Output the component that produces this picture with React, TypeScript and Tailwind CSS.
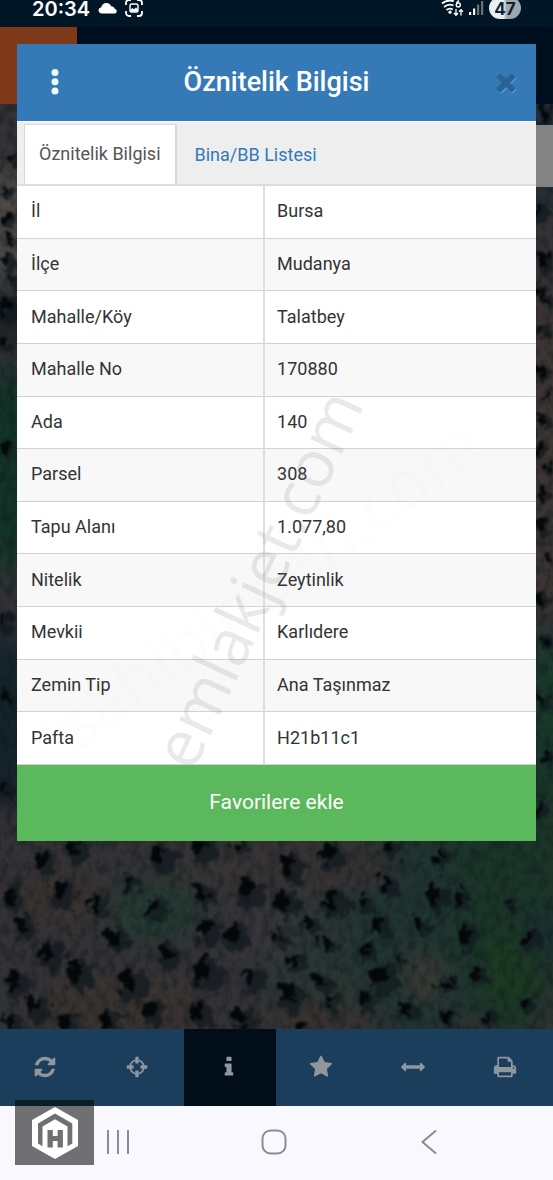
import React from "react";

const rows: [string, string][] = [
  ["İl", "Bursa"],
  ["İlçe", "Mudanya"],
  ["Mahalle/Köy", "Talatbey"],
  ["Mahalle No", "170880"],
  ["Ada", "140"],
  ["Parsel", "308"],
  ["Tapu Alanı", "1.077,80"],
  ["Nitelik", "Zeytinlik"],
  ["Mevkii", "Karlıdere"],
  ["Zemin Tip", "Ana Taşınmaz"],
  ["Pafta", "H21b11c1"],
];

const icons = {
  refresh:
    "M1639 1056q0 5-1 7-64 268-268 434.5t-478 166.5q-146 0-282.5-55t-243.5-157l-129 129q-19 19-45 19t-45-19-19-45v-448q0-26 19-45t45-19h448q26 0 45 19t19 45-19 45l-137 137q71 66 161 102t187 36q134 0 250-65t186-179q11-17 53-117 8-23 30-23h192q13 0 22.5 9.5t9.5 22.5zm25-800v448q0 26-19 45t-45 19h-448q-26 0-45-19t-19-45 19-45l138-138q-148-137-349-137-134 0-250 65t-186 179q-11 17-53 117-8 23-30 23h-199q-13 0-22.5-9.5t-9.5-22.5v-7q65-268 270-434.5t480-166.5q146 0 284 55.5t245 156.5l130-129q19-19 45-19t45 19 19 45z",
  locate:
    "M1325 1024h-109q-26 0-45-19t-19-45v-128q0-26 19-45t45-19h109q-32-108-112.5-188.5t-188.5-112.5v109q0 26-19 45t-45 19h-128q-26 0-45-19t-19-45v-109q-108 32-188.5 112.5t-112.5 188.5h109q26 0 45 19t19 45v128q0 26-19 45t-45 19h-109q32 108 112.5 188.5t188.5 112.5v-109q0-26 19-45t45-19h128q26 0 45 19t19 45v109q108-32 188.5-112.5t112.5-188.5zm339-192v128q0 26-19 45t-45 19h-143q-37 161-154.5 278.5t-278.5 154.5v143q0 26-19 45t-45 19h-128q-26 0-45-19t-19-45v-143q-161-37-278.5-154.5t-154.5-278.5h-143q-26 0-45-19t-19-45v-128q0-26 19-45t45-19h143q37-161 154.5-278.5t278.5-154.5v-143q0-26 19-45t45-19h128q26 0 45 19t19 45v143q161 37 278.5 154.5t154.5 278.5h143q26 0 45 19t19 45z",
  info:
    "M1216 1344v128q0 26-19 45t-45 19h-512q-26 0-45-19t-19-45v-128q0-26 19-45t45-19h64v-384h-64q-26 0-45-19t-19-45v-128q0-26 19-45t45-19h384q26 0 45 19t19 45v576h64q26 0 45 19t19 45zm-128-1152v192q0 26-19 45t-45 19h-256q-26 0-45-19t-19-45v-192q0-26 19-45t45-19h256q26 0 45 19t19 45z",
  star:
    "M1728 647q0 22-26 48l-363 354 86 500q1 7 1 20 0 21-10.5 35.5t-30.5 14.5q-19 0-40-12l-449-236-449 236q-22 12-40 12-21 0-31.5-14.5t-10.5-35.5q0-6 2-20l86-500-364-354q-25-27-25-48 0-37 56-46l502-73 225-455q19-41 49-41t49 41l225 455 502 73q56 9 56 46z",
  measure:
    "M1792 896q0 26-19 45l-256 256q-19 19-45 19t-45-19-19-45v-128h-1024v128q0 26-19 45t-45 19-45-19l-256-256q-19-19-19-45t19-45l256-256q19-19 45-19t45 19 19 45v128h1024v-128q0-26 19-45t45-19 45 19l256 256q19 19 19 45z",
  print:
    "M448 1536h896v-256h-896v256zm0-640h896v-384h-160q-40 0-68-28t-28-68v-160h-640v640zm1152 64q0-26-19-45t-45-19-45 19-19 45 19 45 45 19 45-19 19-45zm128 0v416q0 13-9.5 22.5t-22.5 9.5h-224v160q0 40-28 68t-68 28h-960q-40 0-68-28t-28-68v-160h-224q-13 0-22.5-9.5t-9.5-22.5v-416q0-79 56.5-135.5t135.5-56.5h64v-544q0-40 28-68t68-28h672q40 0 88 20t76 48l152 152q28 28 48 76t20 88v256h64q79 0 135.5 56.5t56.5 135.5z",
  close:
    "M1490 1322q0 40-28 68l-136 136q-28 28-68 28t-68-28l-294-294-294 294q-28 28-68 28t-68-28l-136-136q-28-28-28-68t28-68l294-294-294-294q-28-28-28-68t28-68l136-136q28-28 68-28t68 28l294 294 294-294q28-28 68-28t68 28l136 136q28 28 28 68t-28 68l-294 294 294 294q28 28 28 68z",
};

function Icon({ name, className }: { name: keyof typeof icons; className: string }) {
  return (
    <svg viewBox="0 0 1792 1792" className={className} fill="currentColor" aria-hidden="true">
      <path d={icons[name]} />
    </svg>
  );
}

/* Tree crowns: x, y, radius */
const trees: [number, number, number][] = [
  [45, 862, 12], [75, 851, 10], [162, 861, 13], [202, 850, 12], [240, 849, 9], [290, 868, 12], [330, 856, 12],
  [12, 898, 11], [62, 894, 12], [97, 905, 10], [130, 882, 9], [156, 910, 11], [204, 895, 10], [249, 894, 14],
  [286, 904, 12], [335, 904, 13], [367, 903, 8], [388, 885, 9], [437, 898, 12], [462, 900, 8], [441, 858, 8],
  [24, 929, 11], [116, 940, 11], [207, 932, 12], [235, 937, 13], [279, 937, 9], [310, 925, 9], [328, 947, 9],
  [381, 927, 9], [420, 926, 10], [467, 938, 10], [50, 955, 13], [80, 974, 14], [131, 984, 15], [167, 957, 11],
  [206, 975, 15], [251, 979, 11], [295, 964, 9], [290, 996, 13], [322, 984, 8], [367, 951, 9], [383, 980, 14],
  [447, 985, 9], [16, 984, 12], [36, 1008, 12], [67, 1023, 10], [12, 1026, 10], [108, 1022, 10], [152, 1013, 11],
  [201, 1015, 13], [245, 1020, 12], [303, 1034, 8], [331, 1002, 8], [367, 1001, 10], [408, 1010, 10], [447, 1018, 8],
  [487, 1020, 8], [526, 1005, 8], [530, 940, 9], [480, 975, 8], [390, 850, 9], [510, 905, 6], [399, 960, 6],
  [8, 219, 7], [10, 240, 6], [6, 262, 8], [12, 278, 6], [6, 310, 12], [4, 345, 7], [12, 160, 6], [5, 190, 5],
  [545, 115, 8], [540, 212, 7], [547, 262, 10], [540, 290, 6], [541, 330, 7], [546, 300, 7], [542, 372, 6],
  [549, 395, 5], [543, 420, 6], [540, 450, 7], [550, 470, 5], [543, 495, 6], [541, 525, 7], [549, 560, 6],
  [542, 600, 7], [545, 640, 6], [543, 700, 7], [548, 760, 8], [541, 810, 6], [6, 450, 8], [4, 620, 9], [9, 700, 8],
  [5, 790, 8],
];

/* Ground tint patches: x, y, rx, ry, colour */
const patches: [number, number, number, number, string][] = [
  [6, 225, 26, 60, "#4f4b47"], [4, 320, 30, 25, "#1b2021"], [4, 470, 30, 110, "#123427"], [4, 720, 30, 90, "#13222b"],
  [546, 150, 30, 60, "#222e36"], [546, 450, 30, 170, "#3d3633"], [546, 740, 30, 110, "#173829"],
  [330, 960, 70, 60, "#2a3633"], [420, 930, 70, 110, "#203431"], [510, 900, 60, 140, "#1b3528"],
  [155, 912, 46, 30, "#233a31"], [512, 970, 26, 36, "#1d3a20"], [120, 1005, 90, 26, "#3b342f"],
  [60, 900, 50, 34, "#393331"], [270, 870, 110, 26, "#383434"], [360, 870, 40, 18, "#383131"],
  [425, 978, 20, 24, "#403a35"], [320, 1020, 60, 16, "#3a322d"], [255, 930, 40, 40, "#36353a"],
  [545, 935, 12, 24, "#192a39"],
];

function AerialMap() {
  return (
    <svg
      viewBox="0 27 553 1002"
      preserveAspectRatio="xMidYMid slice"
      className="absolute inset-0 h-full w-full"
      aria-hidden="true"
    >
      <defs>
        <filter id="soft" x="-50%" y="-50%" width="200%" height="200%" colorInterpolationFilters="sRGB">
          <feGaussianBlur stdDeviation="14" />
        </filter>
        <filter id="crown" filterUnits="userSpaceOnUse" x="0" y="27" width="553" height="1010" colorInterpolationFilters="sRGB">
          <feTurbulence type="fractalNoise" baseFrequency="0.1" numOctaves="3" seed="6" result="n" />
          <feDisplacementMap in="SourceGraphic" in2="n" scale="22" xChannelSelector="R" yChannelSelector="G" />
          <feGaussianBlur stdDeviation="1.1" />
        </filter>
        <filter id="grain" filterUnits="userSpaceOnUse" x="0" y="27" width="553" height="1010" colorInterpolationFilters="sRGB">
          <feTurbulence type="fractalNoise" baseFrequency="0.13 0.08" numOctaves="4" seed="11" />
          <feColorMatrix values="0 0 0 0 0.04  0 0 0 0 0.08  0 0 0 0 0.1  2.4 0 0 0 -0.95" />
        </filter>
      </defs>
      <rect y="27" width="553" height="1002" fill="#333236" />
      <g filter="url(#soft)">
        {patches.map(([x, y, rx, ry, c], i) => (
          <ellipse key={i} cx={x} cy={y} rx={rx} ry={ry} fill={c} />
        ))}
      </g>
      <rect y="27" width="553" height="1002" filter="url(#grain)" opacity="0.4" />
      <g filter="url(#crown)">
        {trees.map(([x, y, r], i) => (
          <g key={i}>
            <ellipse cx={x + 2} cy={y + 1} rx={r} ry={r * 1.15} fill="#12191f" opacity="0.75" />
            <ellipse cx={x - r * 0.3} cy={y - r * 0.3} rx={r * 0.55} ry={r * 0.75} fill="#030608" opacity="0.95" />
          </g>
        ))}
      </g>
    </svg>
  );
}

function StatusBar() {
  return (
    <header className="flex h-[27px] items-start justify-between bg-[#011626] pr-8 pl-8 text-white">
      <div className="flex items-start gap-2">
        <span className="font-['Inter',sans-serif] text-[20px] leading-[19px] font-semibold">20:34</span>
        <svg viewBox="0 0 19 12" className="mt-[2px] h-3 w-[19px]" fill="currentColor" aria-hidden="true">
          <path d="M4 11.5C1.700 11.500.5 10 .5 8.500.5 6.800 1.600 5.600 3.300 5.300 3.700 2.600 5.700 1 8.300 1c2.300 0 4 1.100 4.800 3.200 2.200.1 3.300 1.100 3.800 2.800 1.200.4 1.800 1.200 1.800 2.200 0 1.400-1 2.300-2.500 2.300z" />
        </svg>
        <svg viewBox="0 0 18 18" className="-mt-px h-[18px] w-[18px]" fill="none" stroke="currentColor" strokeWidth="1.800" aria-hidden="true">
          <path d="M1 6V4a3 3 0 0 1 3-3h2M12 1h2a3 3 0 0 1 3 3v2M17 12v2a3 3 0 0 1-3 3h-2M6 17H4a3 3 0 0 1-3-3v-2" />
          <rect x="5" y="5" width="8" height="8" rx="1.800" strokeWidth="1.400" />
          <path d="M5.500 12.500V10.500l2-1.500 1.500 1.300L11 8.500l1.800 2v2z" fill="currentColor" stroke="none" />
        </svg>
      </div>
      <div className="flex items-start gap-[5px]">
        <svg viewBox="0 0 23 17" className="h-[17px] w-[23px]" fill="none" stroke="currentColor" strokeWidth="1.700" aria-hidden="true">
          <path d="M1 3.500C4.500.5 9 0 13 1.200M3 7c3-2.600 6.500-3 9.500-1.500M5.500 10c2-1.600 4.300-1.700 6.300-.5" />
          <circle cx="9" cy="12.200" r="1.600" fill="currentColor" stroke="none" />
          <path d="M18 .5c-2 1-2.600 2.500-2.600 4" strokeWidth="1.400" />
          <circle cx="17.300" cy="5" r="2" strokeWidth="1.400" />
          <path d="M15 9v6M13 13l2 2.200 2-2.200M20 15.500V9.800M18 11.800l2-2.200 2 2.200" strokeWidth="1.300" />
        </svg>
        <svg viewBox="0 0 15 15" className="h-[15px] w-[15px]" fill="currentColor" aria-hidden="true">
          <rect x="0" y="12" width="2.200" height="3" />
          <rect x="4" y="8.500" width="2.200" height="6.500" />
          <rect x="8" y="4.500" width="2.200" height="10.500" opacity="0.4" />
          <rect x="12" y="1" width="2.200" height="14" opacity="0.4" />
        </svg>
        <span className="-mt-[3px] h-[22px] w-8 rounded-full bg-linear-to-r from-[#e9f0f3] from-45% to-[#a0a8ae] to-55% text-center font-['Inter',sans-serif] text-[17px] leading-6 font-bold text-[#0c2430]">
          47
        </span>
      </div>
    </header>
  );
}

function AttributeDialog() {
  return (
    <section role="dialog" aria-labelledby="dialog-title" className="relative mx-[17px] mt-[17px] bg-white">
      <div className="flex h-[77px] items-center bg-[#357ab7] pr-4 pb-[2px] pl-6 text-white">
        <button type="button" aria-label="Menü" className="flex w-7 justify-center">
          <svg viewBox="0 0 8 28" className="h-7 w-2" fill="#effcff" aria-hidden="true">
            <circle cx="4" cy="4.500" r="3.500" />
            <circle cx="4" cy="13.700" r="3.500" />
            <circle cx="4" cy="23" r="3.500" />
          </svg>
        </button>
        <h1 id="dialog-title" className="flex-1 pr-2 text-center text-[27px] leading-8 font-medium">Öznitelik Bilgisi</h1>
        <button type="button" aria-label="Kapat" className="flex w-7 justify-center text-[#2a6296] drop-shadow-[1px_1px_0_#5b9bd0]">
          <Icon name="close" className="h-7 w-7" />
        </button>
      </div>
      <div role="tablist" className="flex h-[65px] items-end border-t border-b-2 border-t-[#f8fbfd] border-b-[#dcdcdc] bg-[#eee] pl-[7px] text-[18px]">
        <button type="button" role="tab" aria-selected="true" className="h-[60px] border-t border-r-2 border-l border-[#d9d9d9] bg-white px-[14px] pb-[2px] text-[#555]">
          Öznitelik Bilgisi
        </button>
        <button type="button" role="tab" aria-selected="false" className="h-[60px] px-[18px] text-[#337ab7]">
          Bina/BB Listesi
        </button>
      </div>
      <table className="h-[579px] w-full table-fixed border-separate border-spacing-0 text-left text-[18px] leading-6 text-[#333]">
        <colgroup>
          <col className="w-[47.8%]" />
          <col />
        </colgroup>
        <tbody>
          {rows.map(([label, value]) => (
            <tr key={label} className="odd:bg-white even:bg-[#f8f8f8]">
              <th scope="row" className="border-r-2 border-b border-r-[#dedede] border-b-[#d2d2d2] p-0 pb-px pl-[14px] font-normal">
                {label}
              </th>
              <td className="border-b border-[#d2d2d2] p-0 pb-px pl-3">{value}</td>
            </tr>
          ))}
        </tbody>
      </table>
      <button type="button" className="block h-[76px] w-full bg-[#5cb85c] text-[21px] text-white">
        Favorilere ekle
      </button>
      <svg viewBox="17 44 519 797" className="pointer-events-none absolute inset-0 h-full w-full font-['Open_Sans',sans-serif]">
        <text transform="translate(193 773) rotate(-65)" fontSize="65" fill="#8a8a8a" fillOpacity="0.19">emlakjet.com</text>
        <text transform="translate(78 752) rotate(-36)" fontSize="68" fill="#777" fillOpacity="0.01">sahibinden.com</text>
      </svg>
    </section>
  );
}

const tools: { name: keyof typeof icons; label: string }[] = [
  { name: "refresh", label: "Yenile" },
  { name: "locate", label: "Konum" },
  { name: "info", label: "Bilgi" },
  { name: "star", label: "Favoriler" },
  { name: "measure", label: "Ölçüm" },
  { name: "print", label: "Yazdır" },
];

function Toolbar() {
  return (
    <nav className="grid h-[77px] grid-cols-6 bg-[#1b3e5c] text-[#8f969d]">
      {tools.map((t) => (
        <button
          key={t.name}
          type="button"
          aria-label={t.label}
          className={t.name === "info" ? "flex items-center justify-center bg-[#010e1a] pr-[3px] pb-[2px]" : "flex items-center justify-center pr-[3px] pb-[2px]"}
        >
          <Icon name={t.name} className="h-6 w-6" />
        </button>
      ))}
    </nav>
  );
}

function SystemNav() {
  return (
    <footer className="relative flex h-[74px] items-center justify-center gap-[131px] bg-[#f9f8ff] pr-[5px] pb-[2px] text-[#8b8b91]">
      <button type="button" aria-label="Son uygulamalar">
        <svg viewBox="0 0 24 24" className="h-6 w-6" stroke="currentColor" strokeWidth="2" aria-hidden="true">
          <path d="M2 0v24M12 0v24M22 0v24" />
        </svg>
      </button>
      <button type="button" aria-label="Ana ekran">
        <svg viewBox="0 0 26 26" className="h-[26px] w-[26px]" fill="none" stroke="currentColor" strokeWidth="2" aria-hidden="true">
          <rect x="1.500" y="1.500" width="23" height="23" rx="8" />
        </svg>
      </button>
      <button type="button" aria-label="Geri">
        <svg viewBox="0 0 24 24" className="h-6 w-6" fill="none" stroke="currentColor" strokeWidth="2" aria-hidden="true">
          <path d="M18 .5 4.500 12 18 23.500" />
        </svg>
      </button>
      <div className="absolute -top-[6px] left-[15px] flex h-[65px] w-[79px] items-center justify-center bg-black/55">
        <svg viewBox="0 0 46 52" className="h-[52px] w-[46px]" aria-hidden="true">
          <path d="M23 0 46 13v26L23 52 0 39V13z" fill="#fff" />
          <path d="M23 6.500 40.300 16.500V36.500l-4.800 2.800V19.500L23 12.300 10.500 19.500v19.800L6 36.500V16.500z" fill="#707073" />
          <path d="M15.500 23h5.300v6h4.800v-6h5.300v17.500h-5.300v-6.500h-4.800v6.500h-5.300z" fill="#707073" />
        </svg>
      </div>
    </footer>
  );
}

export default function App() {
  return (
    <div className="flex min-h-screen flex-col bg-[#011626] font-['Roboto',sans-serif]">
      <StatusBar />
      <main className="relative flex-1 overflow-hidden pb-[188px]">
        <AerialMap />
        <div className="absolute inset-x-0 top-0 flex h-[77px] bg-[#000f1d]">
          <div className="w-[77px] bg-[#7e3a18]" />
        </div>
        <div className="absolute top-[98px] right-0 h-[62px] w-8 bg-[#838383]" />
        <AttributeDialog />
      </main>
      <Toolbar />
      <SystemNav />
    </div>
  );
}
